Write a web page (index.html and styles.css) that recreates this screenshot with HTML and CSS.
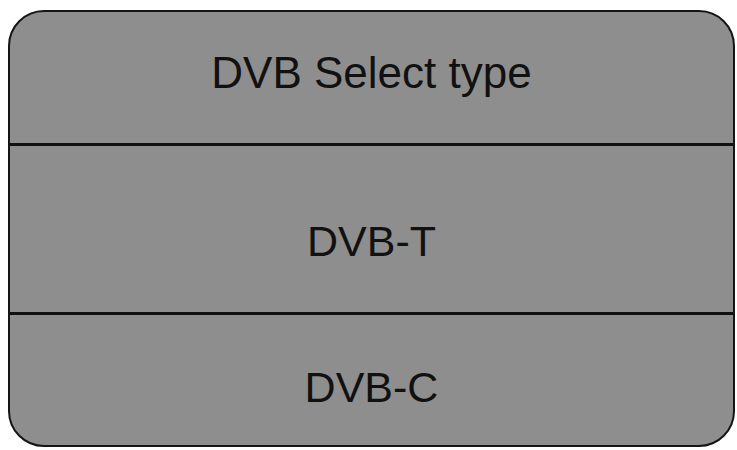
FILE: index.html
```html
<!DOCTYPE html>
<html>
<head>
<meta charset="utf-8">
<link rel="stylesheet" href="styles.css">
</head>
<body>
<div class="panel">
  <div class="row row-head">DVB Select type</div>
  <div class="row row-t">DVB-T</div>
  <div class="row row-c">DVB-C</div>
</div>
</body>
</html>
```
FILE: styles.css
```css
html, body {
  margin: 0;
  padding: 0;
  background: #ffffff;
}
.panel {
  box-sizing: border-box;
  margin: 10px 0 0 8px;
  width: 727px;
  height: 437px;
  border: 2px solid #151515;
  border-radius: 36px;
  background: #8e8e8e;
  display: flex;
  flex-direction: column;
  overflow: hidden;
  font-family: "Liberation Sans", Arial, sans-serif;
  font-size: 43px;
  line-height: 43px;
  color: #111111;
}
.row {
  box-sizing: border-box;
  text-align: center;
}
.row-head {
  height: 134px;
  padding-top: 39px;
  font-size: 44px;
  border-bottom: 3px solid #111111;
}
.row-t {
  height: 169px;
  padding-top: 74px;
  border-bottom: 3px solid #111111;
}
.row-c {
  flex: 1;
  padding-top: 51px;
}
```
